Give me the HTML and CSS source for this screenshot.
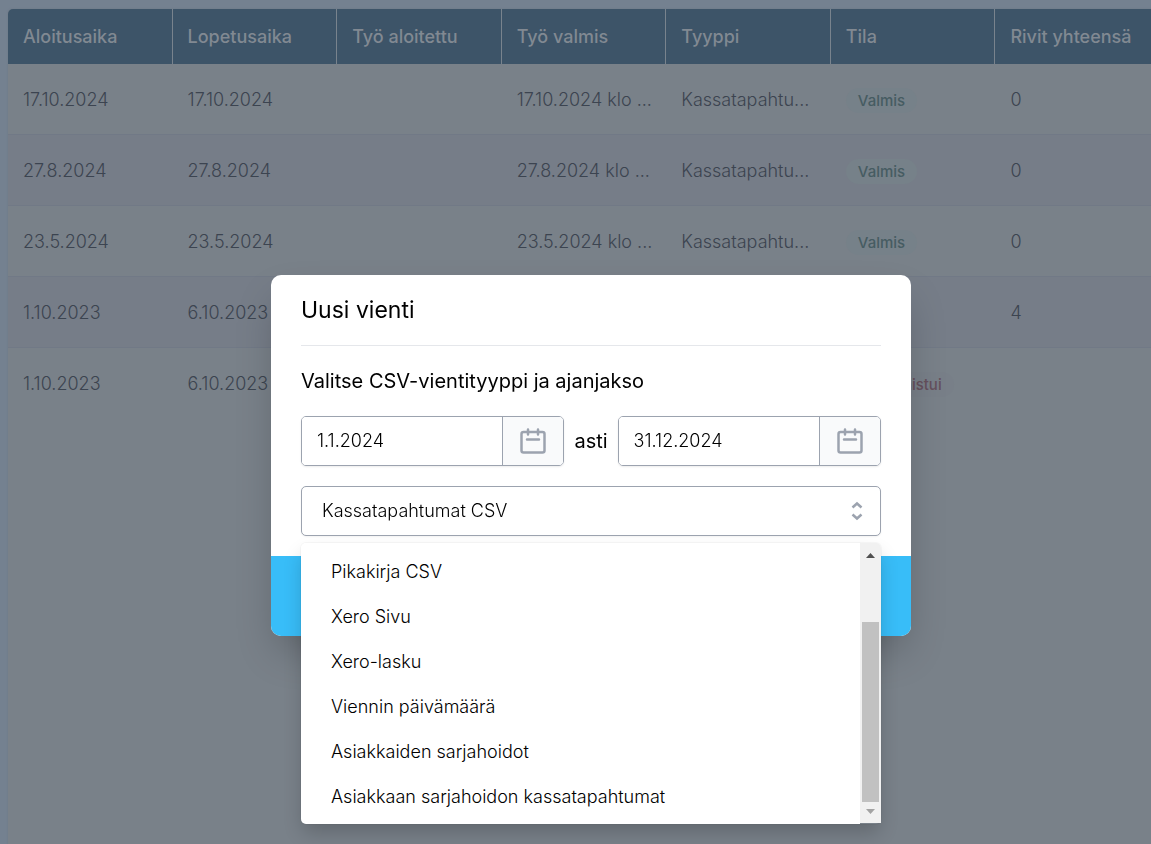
FILE: index.html
```html
<!DOCTYPE html>
<html lang="fi">
<head>
<meta charset="utf-8">
<title>Uusi vienti</title>
<link rel="stylesheet" href="styles.css">
</head>
<body>
<main class="page">
  <div class="sheet">
    <table class="exports">
      <thead>
        <tr><th>Aloitusaika</th><th>Lopetusaika</th><th>Työ aloitettu</th><th>Työ valmis</th><th>Tyyppi</th><th>Tila</th><th>Rivit yhteensä</th></tr>
      </thead>
      <tbody>
        <tr><td>17.10.2024</td><td>17.10.2024</td><td></td><td>17.10.2024 klo ...</td><td>Kassatapahtu...</td><td><span class="badge">Valmis</span></td><td>0</td></tr>
        <tr><td>27.8.2024</td><td>27.8.2024</td><td></td><td>27.8.2024 klo ...</td><td>Kassatapahtu...</td><td><span class="badge">Valmis</span></td><td>0</td></tr>
        <tr><td>23.5.2024</td><td>23.5.2024</td><td></td><td>23.5.2024 klo ...</td><td>Kassatapahtu...</td><td><span class="badge">Valmis</span></td><td>0</td></tr>
        <tr><td>1.10.2023</td><td>6.10.2023</td><td></td><td></td><td></td><td></td><td>4</td></tr>
        <tr><td>1.10.2023</td><td>6.10.2023</td><td></td><td></td><td></td><td><span class="badge badge-failed">Epäonnistui</span></td><td></td></tr>
      </tbody>
    </table>
  </div>
</main>

<div class="backdrop">
  <form class="modal" role="dialog" aria-modal="true" aria-labelledby="title">
    <div class="modal-body">
      <h1 class="title" id="title">Uusi vienti</h1>
      <p class="lead" id="lead">Valitse CSV-vientityyppi ja ajanjakso</p>
      <div class="range">
        <div class="date">
          <input class="date-input" type="text" value="1.1.2024" aria-label="Alkaen">
          <button class="date-button" type="button" aria-label="Avaa kalenteri">
            <svg class="calendar" viewBox="0 0 28 28"><rect x="2.5" y="5" width="23" height="20.5" rx="2"/><path d="M9 2.500v5M19 2.500v5M8 12.500h12"/></svg>
          </button>
        </div>
        <span class="until">asti</span>
        <div class="date">
          <input class="date-input" type="text" value="31.12.2024" aria-label="Asti">
          <button class="date-button" type="button" aria-label="Avaa kalenteri">
            <svg class="calendar" viewBox="0 0 28 28"><rect x="2.5" y="5" width="23" height="20.5" rx="2"/><path d="M9 2.500v5M19 2.500v5M8 12.500h12"/></svg>
          </button>
        </div>
      </div>
      <div class="picker">
        <select class="select" aria-labelledby="lead">
          <option selected>Kassatapahtumat CSV</option>
          <option>Pikakirja CSV</option>
          <option>Xero Sivu</option>
          <option>Xero-lasku</option>
          <option>Viennin päivämäärä</option>
          <option>Asiakkaiden sarjahoidot</option>
          <option>Asiakkaan sarjahoidon kassatapahtumat</option>
        </select>
        <svg class="chevrons" viewBox="0 0 12 20"><path d="M1.500 6.500L6 2.500l4.500 4M1.500 13.500l4.500 4 4.500-4"/></svg>
        <div class="menu">
          <ul class="options" role="listbox" aria-labelledby="lead">
            <li class="option" role="option">Pikakirja CSV</li>
            <li class="option" role="option">Xero Sivu</li>
            <li class="option" role="option">Xero-lasku</li>
            <li class="option" role="option">Viennin päivämäärä</li>
            <li class="option" role="option">Asiakkaiden sarjahoidot</li>
            <li class="option" role="option">Asiakkaan sarjahoidon kassatapahtumat</li>
          </ul>
          <div class="scrollbar" aria-hidden="true">
            <svg class="arrow" viewBox="0 0 9 5"><path d="M4.500 0L9 5H0z"/></svg>
            <div class="thumb"></div>
            <svg class="arrow arrow-end" viewBox="0 0 9 5"><path d="M0 0h9L4.500 5z"/></svg>
          </div>
        </div>
      </div>
    </div>
    <div class="modal-footer"></div>
  </form>
</div>
</body>
</html>
```
FILE: styles.css
```css
* {
  box-sizing: border-box;
}

body {
  margin: 0;
  overflow: hidden;
  background: #748190;
  color: #000;
  font: 300 18px/28px Inter, "Liberation Sans", sans-serif;
}

.page {
  min-height: 100vh;
  padding: 9px 0 0 8px;
}

.sheet {
  width: calc(100vw + 1px);
  min-height: 100vh;
  background: #798189;
  border-radius: 5px 0 0 0;
  box-shadow: 0 0 2px #6b7583;
  overflow: hidden;
}

.exports {
  width: 100%;
  table-layout: fixed;
  border-collapse: separate;
  border-spacing: 0;
}

.exports th,
.exports td {
  padding: 0 12px 0 15px;
  text-align: left;
  white-space: nowrap;
}

.exports th {
  height: 55px;
  background: #3d5468;
  border-right: 1px solid #79838d;
  color: #818992;
  font-weight: 500;
}

.exports td {
  height: 71px;
  padding-top: 2px;
  border-bottom: 1px solid #717986;
  color: #3c4450;
}

.exports tr:nth-child(even) td {
  background: #767d88;
}

.exports tr:last-child td {
  border-bottom-color: transparent;
}

.badge {
  display: inline-block;
  padding: 0 12px;
  border-radius: 13px;
  background: #768189;
  color: #465c62;
  font-size: 15px;
  font-weight: 500;
  line-height: 25px;
}

.badge-failed {
  background: #787f88;
  color: #65505c;
}

.backdrop {
  position: fixed;
  inset: 0;
  display: flex;
  align-items: center;
  justify-content: center;
  padding: 67px 0 0 31px;
}

.modal {
  width: 640px;
  max-width: 100%;
  background: #fff;
  border-radius: 10px;
  box-shadow: 0 20px 40px -8px rgba(0, 0, 0, 0.25);
}

.modal-body {
  padding: 20px 30px;
}

.title {
  margin: 0 0 20px;
  padding-bottom: 20px;
  border-bottom: 1px solid #e5e7eb;
  font-size: 23px;
  font-weight: 400;
  line-height: 30px;
}

.lead {
  margin: 0 0 20px;
  font-size: 20px;
  font-weight: 400;
  line-height: 30px;
}

.range {
  display: flex;
  align-items: center;
  gap: 10px;
  margin-bottom: 20px;
}

.date {
  display: flex;
  flex: 1;
  height: 50px;
  border: 1px solid #9ca3af;
  border-radius: 5px;
  box-shadow: 0 1px 2px rgba(0, 0, 0, 0.08);
  overflow: hidden;
}

.date-input {
  flex: 1;
  min-width: 0;
  padding: 0 15px;
  border: 0;
  background: #fff;
  color: #000;
  font: inherit;
}

.date-button {
  display: flex;
  align-items: center;
  justify-content: center;
  width: 61px;
  padding: 0;
  border: 0;
  border-left: 1px solid #9ca3af;
  background: #f9fafb;
}

.calendar {
  width: 28px;
  height: 28px;
  fill: none;
  stroke: #9ca3af;
  stroke-width: 2.5;
  stroke-linecap: round;
}

.until {
  font-size: 20px;
  font-weight: 400;
}

.picker {
  position: relative;
}

.select {
  display: block;
  width: 100%;
  height: 50px;
  padding: 0 20px;
  border: 1px solid #9ca3af;
  border-radius: 5px;
  background: #fff;
  box-shadow: 0 1px 2px rgba(0, 0, 0, 0.05);
  color: #000;
  font: inherit;
  appearance: none;
}

.chevrons {
  position: absolute;
  top: 15px;
  right: 18px;
  width: 12px;
  height: 20px;
  fill: none;
  stroke: #9ca3af;
  stroke-width: 2.5;
}

.menu {
  position: absolute;
  top: 57px;
  left: 0;
  right: 0;
  display: flex;
  align-items: flex-start;
  border-radius: 5px;
  box-shadow: 0 0 2px rgba(0, 0, 0, 0.12), 0 10px 20px -2px rgba(0, 0, 0, 0.2);
}

.options {
  flex: 1;
  margin: 0;
  padding: 6px 0 5px;
  background: #fff;
  border-radius: 5px 0 0 5px;
  list-style: none;
}

.option {
  padding: 0 30px;
  line-height: 45px;
}

.scrollbar {
  display: flex;
  flex-direction: column;
  align-items: center;
  width: 21px;
  height: 280px;
  padding: 10px 2px 9px;
  background: #f1f1f1;
  border-radius: 0 5px 0 0;
}

.arrow {
  width: 9px;
  height: 5px;
  fill: #505050;
}

.arrow-end {
  margin-top: 7px;
  fill: #a3a3a3;
}

.thumb {
  width: 17px;
  height: 180px;
  margin-top: auto;
  background: #c1c1c1;
}

.modal-footer {
  height: 80px;
  background: #38bdf8;
  border-radius: 0 0 10px 10px;
}
```
